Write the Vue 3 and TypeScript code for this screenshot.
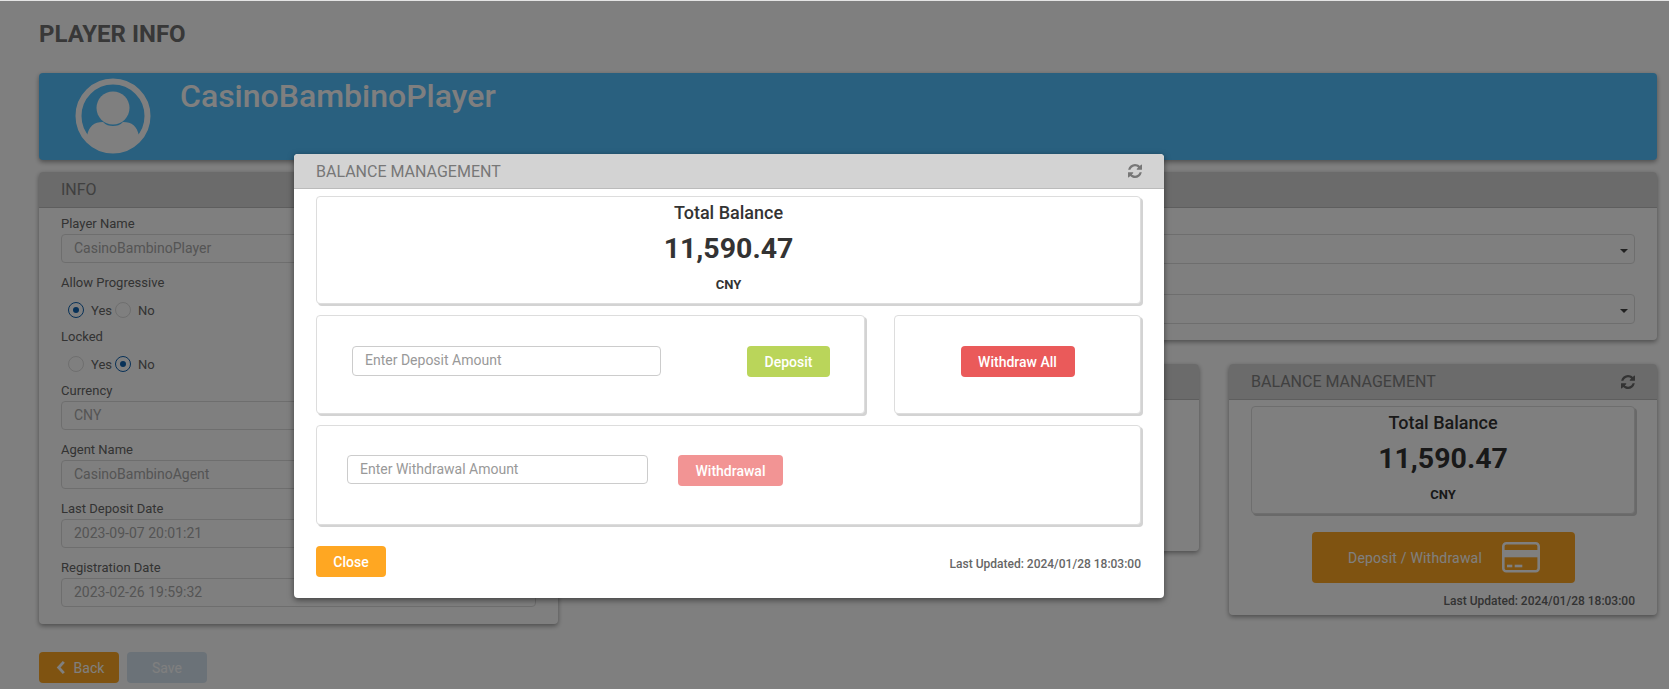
<script setup lang="ts">
interface Field {
  label: string
  value: string
}

const topFields: Field[] = [{ label: 'Player Name', value: 'CasinoBambinoPlayer' }]
const bottomFields: Field[] = [
  { label: 'Currency', value: 'CNY' },
  { label: 'Agent Name', value: 'CasinoBambinoAgent' },
  { label: 'Last Deposit Date', value: '2023-09-07 20:01:21' },
  { label: 'Registration Date', value: '2023-02-26 19:59:32' },
]

const refreshPath =
  'M1511 928q0 5-1 7-64 268-268 434.5t-478 166.5q-146 0-282.5-55t-243.5-157l-129 129q-19 19-45 19t-45-19-19-45v-448q0-26 19-45t45-19h448q26 0 45 19t19 45-19 45l-137 137q71 66 161 102t187 36q134 0 250-65t186-179q11-17 53-117 8-23 30-23h192q13 0 22.5 9.5t9.5 22.5zm25-800v448q0 26-19 45t-45 19h-448q-26 0-45-19t-19-45 19-45l138-138q-148-137-349-137-134 0-250 65t-186 179q-11 17-53 117-8 23-30 23h-199q-13 0-22.5-9.5t-9.5-22.5v-7q65-268 270-434.5t480-166.5q146 0 284 55.5t245 156.5l130-129q19-19 45-19t45 19 19 45z'
</script>

<template>
  <div class="page">
    <h1 class="title">PLAYER INFO</h1>

    <div class="banner">
      <svg class="avatar" viewBox="0 0 76 76">
        <defs>
          <clipPath id="avatar-clip"><circle cx="38" cy="38" r="35" /></clipPath>
        </defs>
        <circle cx="38" cy="38" r="34.5" fill="none" stroke="#fff" stroke-width="6" />
        <circle cx="38" cy="30" r="16.5" fill="#fff" />
        <path
          clip-path="url(#avatar-clip)"
          fill="#fff"
          d="M12 58c2-10 7-14 16-14 3 3 6 4 10 4s7-1 10-4c9 0 14 4 16 14v18H12z"
        />
      </svg>
      <div class="banner-name">CasinoBambinoPlayer</div>
    </div>

    <div class="columns">
      <section class="card">
        <header class="card-head">INFO</header>
        <div class="info-body">
          <div v-for="f in topFields" :key="f.label" class="field">
            <label>{{ f.label }}</label>
            <input class="text-input" :value="f.value" readonly />
          </div>
          <label class="plain-label">Allow Progressive</label>
          <div class="radios">
            <span class="radio on"></span><span class="radio-text">Yes</span>
            <span class="radio"></span><span class="radio-text">No</span>
          </div>
          <label class="plain-label">Locked</label>
          <div class="radios">
            <span class="radio"></span><span class="radio-text">Yes</span>
            <span class="radio on"></span><span class="radio-text">No</span>
          </div>
          <div v-for="f in bottomFields" :key="f.label" class="field">
            <label>{{ f.label }}</label>
            <input class="text-input" :value="f.value" readonly />
          </div>
        </div>
      </section>

      <div class="right-col">
        <section class="card">
          <header class="card-head"></header>
          <div class="select-body">
            <div class="select-box"><span class="caret"></span></div>
            <div class="select-box"><span class="caret"></span></div>
          </div>
        </section>

        <div class="lower-row">
          <section class="card middle-card">
            <header class="card-head"></header>
          </section>

          <section class="card balance-card">
            <header class="card-head">
              <span>BALANCE MANAGEMENT</span>
              <svg class="refresh refresh-page" viewBox="0 0 1536 1536"><path :d="refreshPath" /></svg>
            </header>
            <div class="balance-body">
              <div class="box total-box">
                <div class="total-title">Total Balance</div>
                <div class="total-amount">11,590.47</div>
                <div class="total-currency">CNY</div>
              </div>
              <button class="open-btn">
                <span>Deposit / Withdrawal</span>
                <svg class="card-icon" viewBox="0 0 38 31">
                  <rect x="1.3" y="1.3" width="35.4" height="28" rx="3" fill="none" stroke="#fff" stroke-width="2.6" />
                  <rect x="2" y="8" width="34" height="7.3" fill="#fff" />
                  <rect x="5" y="22.7" width="5.3" height="2.6" fill="#fff" />
                  <rect x="12.7" y="22.7" width="7.6" height="2.6" fill="#fff" />
                </svg>
              </button>
              <div class="updated">Last Updated: 2024/01/28 18:03:00</div>
            </div>
          </section>
        </div>
      </div>
    </div>

    <div class="actions">
      <button class="btn-back">
        <svg class="chevron" viewBox="0 0 10 16">
          <path d="M8 2 2.5 8 8 14" fill="none" stroke="#fff" stroke-width="3" />
        </svg>
        Back
      </button>
      <button class="btn-save">Save</button>
    </div>

    <div class="overlay">
      <div class="modal">
        <header class="modal-head">
          <span>BALANCE MANAGEMENT</span>
          <svg class="refresh refresh-modal" viewBox="0 0 1536 1536"><path :d="refreshPath" /></svg>
        </header>
        <div class="modal-body">
          <div class="box total-box">
            <div class="total-title">Total Balance</div>
            <div class="total-amount">11,590.47</div>
            <div class="total-currency">CNY</div>
          </div>

          <div class="modal-row">
            <div class="box deposit-box">
              <input class="amount-input deposit-input" placeholder="Enter Deposit Amount" />
              <button class="action deposit-btn">Deposit</button>
            </div>
            <div class="box withdraw-all-box">
              <button class="action withdraw-all-btn">Withdraw All</button>
            </div>
          </div>

          <div class="box withdraw-box">
            <input class="amount-input withdraw-input" placeholder="Enter Withdrawal Amount" />
            <button class="action withdraw-btn">Withdrawal</button>
          </div>

          <footer class="modal-foot">
            <button class="action close-btn">Close</button>
            <div class="updated foot-updated">Last Updated: 2024/01/28 18:03:00</div>
          </footer>
        </div>
      </div>
    </div>
  </div>
</template>

<style>
html,
body {
  margin: 0;
  overflow: hidden;
}
</style>

<style scoped>
* {
  box-sizing: border-box;
}

.page {
  position: relative;
  width: 1669px;
  height: 689px;
  overflow: hidden;
  padding: 0 12px 0 39px;
  background: #fff;
  border-top: 1px solid #e4e4e4;
  font-family: Roboto, 'Liberation Sans', sans-serif;
  color: #666;
}

.title {
  margin: 0 0 25px;
  padding-top: 19px;
  font-size: 24px;
  line-height: 28px;
  font-weight: 700;
  color: #707070;
}

.banner {
  display: flex;
  height: 87px;
  padding: 5px 0 0 36px;
  background: #52c0ff;
  border-radius: 4px;
  box-shadow: 0 2px 5px rgba(0, 0, 0, 0.4);
}

.avatar {
  width: 76px;
  height: 76px;
}

.banner-name {
  margin: 1px 0 0 29px;
  font-size: 32px;
  line-height: 34px;
  font-weight: 500;
  color: #fff;
}

.columns {
  display: grid;
  grid-template-columns: 519px 1fr;
  gap: 17px;
  margin-top: 12px;
}

.card {
  background: #fff;
  border-radius: 4px;
  box-shadow: 0 2px 5px rgba(0, 0, 0, 0.4);
}

.card-head {
  display: flex;
  align-items: center;
  justify-content: space-between;
  height: 36px;
  padding: 0 22px;
  background: #d6d6d6;
  border-bottom: 1px solid #bcbcbc;
  border-radius: 4px 4px 0 0;
  font-size: 16px;
  color: #808080;
}

.info-body {
  padding: 8px 22px 17px;
}

.field {
  margin-bottom: 12px;
}

.field:last-child {
  margin-bottom: 0;
}

.field label,
.plain-label {
  display: block;
  height: 16px;
  font-size: 13px;
  line-height: 16px;
  color: #666;
}

.plain-label {
  margin-bottom: 11px;
}

.text-input {
  display: block;
  width: 475px;
  height: 29px;
  margin-top: 2px;
  padding: 0 12px 2px;
  background: #fff;
  border: 1px solid #ddd;
  border-radius: 4px;
  outline: none;
  font-family: inherit;
  font-size: 14px;
  color: #aaa;
}

.radios {
  display: flex;
  align-items: center;
  height: 16px;
  margin: 0 0 11px 7px;
  font-size: 13px;
  color: #666;
}

.radio {
  position: relative;
  width: 16px;
  height: 16px;
  border: 1px solid #ddd;
  border-radius: 50%;
}

.radio.on {
  border-color: #0f62b0;
}

.radio.on::after {
  content: '';
  position: absolute;
  top: 4px;
  left: 4px;
  width: 6px;
  height: 6px;
  border-radius: 50%;
  background: #0f62b0;
}

.radio-text {
  margin: 0 3px 0 7px;
  min-width: 20px;
}

.right-col {
  min-width: 0;
}

.select-body {
  display: flex;
  flex-direction: column;
  gap: 30px;
  padding: 26px 22px 16px;
}

.select-box {
  position: relative;
  height: 30px;
  background: #fff;
  border: 1px solid #ddd;
  border-radius: 4px;
}

.caret {
  position: absolute;
  top: 14px;
  right: 6px;
  border-style: solid;
  border-width: 4px 4px 0;
  border-color: #444 transparent transparent;
}

.lower-row {
  display: flex;
  align-items: flex-start;
  justify-content: space-between;
  margin-top: 24px;
}

.middle-card {
  width: 624px;
  height: 187px;
}

.balance-card {
  width: 428px;
  height: 251px;
}

.refresh {
  fill: currentColor;
}

.refresh-page {
  width: 14px;
  height: 14px;
  color: #666;
}

.balance-body {
  display: flex;
  flex-direction: column;
  padding: 6px 22px 0;
}

.box {
  background: #fff;
  border: 1px solid #ddd;
  border-radius: 4px;
  box-shadow: 2px 2px 0 #d3d3d3;
}

.total-box {
  height: 108px;
  padding-top: 6px;
  text-align: center;
  color: #333;
}

.total-title {
  font-size: 18px;
  line-height: 20px;
  font-weight: 500;
}

.total-amount {
  margin-top: 8px;
  font-size: 28.5px;
  line-height: 36px;
  font-weight: 700;
}

.total-currency {
  margin-top: 10px;
  font-size: 13px;
  line-height: 16px;
  font-weight: 700;
}

.open-btn {
  display: flex;
  align-items: center;
  gap: 20px;
  width: 263px;
  height: 51px;
  margin: 18px 0 0 61px;
  padding: 0 0 0 36px;
  background: #ffa722;
  border: 0;
  border-radius: 4px;
  font-family: inherit;
  font-size: 14px;
  color: #fff;
  letter-spacing: 0.2px;
}

.card-icon {
  width: 38px;
  height: 31px;
}

.updated {
  font-size: 12px;
  line-height: 16px;
  font-weight: 500;
  color: #666;
  text-align: right;
}

.balance-body .updated {
  margin-top: 10px;
}

.actions {
  display: flex;
  gap: 8px;
  margin-top: 28px;
}

.actions button {
  display: flex;
  align-items: center;
  justify-content: center;
  width: 80px;
  height: 31px;
  border: 0;
  border-radius: 4px;
  font-family: inherit;
  font-size: 14px;
  color: #fff;
}

.btn-back {
  gap: 8px;
  padding: 0 0 0 2px;
  background: #ffa722 !important;
}

.btn-save {
  background: #d7e5f0 !important;
}

.chevron {
  width: 10px;
  height: 15px;
}

.overlay {
  position: absolute;
  inset: 0;
  padding: 153px 0 0 294px;
  background: rgba(0, 0, 0, 0.5);
}

.modal {
  width: 870px;
  height: 444px;
  background: #fff;
  border-radius: 4px;
  box-shadow: 0 2px 6px rgba(0, 0, 0, 0.5);
}

.modal-head {
  display: flex;
  align-items: center;
  justify-content: space-between;
  height: 35px;
  padding: 0 22px;
  background: #d3d3d3;
  border-bottom: 1px solid #bbb;
  border-radius: 4px 4px 0 0;
  font-size: 16px;
  color: #777;
}

.refresh-modal {
  width: 14px;
  height: 14px;
  color: #777;
}

.modal-body {
  padding: 7px 23px 0 22px;
}

.modal-row {
  display: flex;
  gap: 29px;
  margin-top: 11px;
}

.deposit-box {
  display: flex;
  align-items: flex-start;
  gap: 86px;
  width: 549px;
  height: 99px;
  padding: 30px 0 0 35px;
}

.withdraw-all-box {
  display: flex;
  align-items: flex-start;
  justify-content: center;
  width: 247px;
  height: 99px;
  padding-top: 30px;
}

.withdraw-box {
  display: flex;
  align-items: flex-start;
  gap: 30px;
  height: 100px;
  margin-top: 11px;
  padding: 29px 0 0 30px;
}

.amount-input {
  height: 30px;
  padding: 0 12px 2px;
  background: #fff;
  border: 1px solid #ccc;
  border-radius: 4px;
  outline: none;
  font-family: inherit;
  font-size: 14px;
}

.amount-input::placeholder {
  color: #999;
}

.deposit-input {
  width: 309px;
}

.withdraw-input {
  width: 301px;
  height: 29px;
}

.action {
  height: 31px;
  padding: 0;
  border: 0;
  border-radius: 4px;
  font-family: inherit;
  font-size: 14px;
  font-weight: 500;
  color: #fff;
}

.deposit-btn {
  width: 83px;
  background: #bad55a;
}

.withdraw-all-btn {
  width: 114px;
  background: #ea5a5a;
}

.withdraw-btn {
  width: 105px;
  background: #f29494;
}

.close-btn {
  width: 70px;
  background: #ffa722;
}

.modal-foot {
  display: flex;
  align-items: flex-start;
  justify-content: space-between;
  margin-top: 21px;
}

.foot-updated {
  padding-top: 10px;
}
</style>
